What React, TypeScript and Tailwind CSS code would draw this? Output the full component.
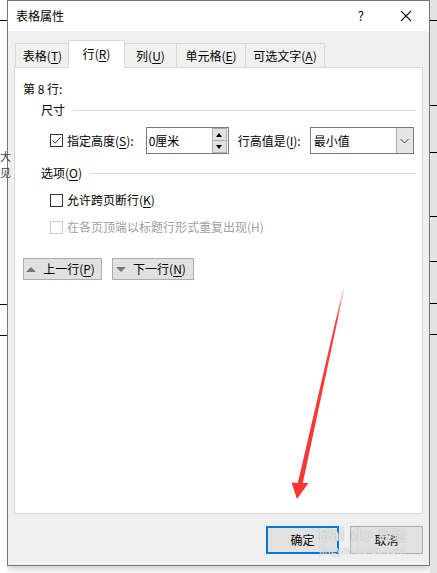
import React from "react";

const font = "font-['Noto_Sans_CJK_SC',sans-serif]";

const tabs = [
  { label: "表格", key: "T", w: "w-[54px]" },
  { label: "行", key: "R", w: "w-[57px]", active: true },
  { label: "列", key: "U", w: "w-[52px]" },
  { label: "单元格", key: "E", w: "w-[69px]" },
  { label: "可选文字", key: "A", w: "w-[80px]" },
];

function Mn({ text, k, after = "" }: { text: string; k: string; after?: string }) {
  return (
    <span>
      {text}(<span className="underline underline-offset-2">{k}</span>){after}
    </span>
  );
}

function Check({ checked, disabled }: { checked?: boolean; disabled?: boolean }) {
  return (
    <span
      className={`flex h-[13px] w-[13px] items-center justify-center border bg-white ${
        disabled ? "border-[#cccccc]" : "border-[#333333]"
      }`}
    >
      {checked && (
        <svg width="11" height="11" viewBox="0 0 11 11">
          <path d="M1.5 5.5 L4.2 8.2 L9.5 2.2" fill="none" stroke="#333" strokeWidth="1" />
        </svg>
      )}
    </span>
  );
}

function GroupTitle({ children }: { children: React.ReactNode }) {
  return (
    <div className="flex h-4 items-center gap-[8px] pl-[18px]">
      <span>{children}</span>
      <span className="h-px flex-1 bg-[#dcdcdc]" />
    </div>
  );
}

export default function App() {
  return (
    <div className={`relative flex h-[573px] w-[437px] overflow-hidden bg-white text-[12px] leading-4 text-black ${font}`}>
      {/* document behind, left */}
      <div className="relative w-[7px] shrink-0 bg-white">
        <div className="mt-[20px] h-px bg-black" />
        <div className="mt-[127px] text-[11px] leading-[16px] text-[#444]">大</div>
        <div className="text-[11px] leading-[16px] text-[#444]">见</div>
        <div className="mt-[124px] h-px bg-black" />
        <div className="mt-[30px] h-px bg-black" />
      </div>

      {/* dialog */}
      <div className="flex h-[566px] w-[423px] shrink-0 flex-col border border-[#777777] bg-[#f0f0f0] shadow-[0_2px_8px_rgba(0,0,0,0.25)]">
        <div className="flex h-[30px] items-center bg-white pl-[8px]">
          <span className="flex-1">表格属性</span>
          <span className="mr-[36px] text-[13px]">?</span>
          <svg width="12" height="12" viewBox="0 0 12 12" className="mr-[17px]">
            <path d="M1 1 L11 11 M11 1 L1 11" stroke="#111" strokeWidth="1.1" />
          </svg>
        </div>

        <div className="flex flex-1 flex-col px-[6px] pt-[9px]">
          <div className="flex h-[28px] items-end pl-px">
            {tabs.map((t) =>
              t.active ? (
                <div
                  key={t.key}
                  className={`${t.w} relative z-10 -mx-px flex h-[28px] items-center justify-center border border-b-0 border-[#d9d9d9] bg-white pb-[2px]`}
                >
                  <Mn text={t.label} k={t.key} />
                </div>
              ) : (
                <div
                  key={t.key}
                  className={`${t.w} flex h-[25px] items-center justify-center border border-b-0 border-r-0 border-[#d9d9d9] bg-[#f0f0f0] last:border-r`}
                >
                  <Mn text={t.label} k={t.key} />
                </div>
              )
            )}
          </div>

          <div className="-mt-px flex h-[447px] flex-col border border-[#d9d9d9] bg-white pl-[8px] pr-[6px] pt-[13px]">
            <div className="h-4">第 8 行:</div>

            <div className="mt-[5px]">
              <GroupTitle>尺寸</GroupTitle>
            </div>

            <div className="mt-[9px] flex h-[27px] items-center pl-[27px]">
              <Check checked />
              <span className="ml-[4px]">
                <Mn text="指定高度" k="S" after=":" />
              </span>
              <div className="ml-[12px] flex h-[27px] w-[83px] items-center border border-[#7a7a7a] bg-white pl-[2px] pr-px">
                <span className="flex-1">0厘米</span>
                <div className="flex h-[25px] w-[15px] flex-col">
                  <div className="flex flex-1 items-center justify-center border border-[#adadad] bg-[#e1e1e1]">
                    <span className="h-0 w-0 border-x-[3px] border-b-[4px] border-x-transparent border-b-black" />
                  </div>
                  <div className="-mt-px flex flex-1 items-center justify-center border border-[#adadad] bg-[#e1e1e1]">
                    <span className="h-0 w-0 border-x-[3px] border-t-[4px] border-x-transparent border-t-black" />
                  </div>
                </div>
              </div>
              <span className="ml-[9px]">
                <Mn text="行高值是" k="I" after=":" />
              </span>
              <div className="ml-[9px] flex h-[27px] w-[104px] items-center border border-[#7a7a7a] bg-white pl-[3px]">
                <span className="flex-1">最小值</span>
                <div className="flex h-full w-[17px] items-center justify-center border-l border-[#adadad] bg-[#e5e5e5]">
                  <svg width="9" height="6" viewBox="0 0 9 6">
                    <path d="M0.5 1 L4.5 5 L8.5 1" fill="none" stroke="#444" strokeWidth="1" />
                  </svg>
                </div>
              </div>
            </div>

            <div className="mt-[11px]">
              <GroupTitle>
                <Mn text="选项" k="O" />
              </GroupTitle>
            </div>

            <div className="mt-[11px] flex h-4 items-center pl-[27px]">
              <Check />
              <span className="ml-[4px]">
                <Mn text="允许跨页断行" k="K" />
              </span>
            </div>

            <div className="mt-[11px] flex h-4 items-center pl-[27px] text-[#a0a0a0]">
              <Check disabled />
              <span className="ml-[4px]">在各页顶端以标题行形式重复出现(H)</span>
            </div>

            <div className="mt-[23px] flex gap-[10px]">
              <button className="flex h-[22px] w-[79px] items-center justify-center gap-[7px] border border-[#adadad] bg-[#e1e1e1] pr-[4px]">
                <span className="h-0 w-0 border-x-[5px] border-b-[5px] border-x-transparent border-b-[#777]" />
                <Mn text="上一行" k="P" />
              </button>
              <button className="flex h-[22px] w-[82px] items-center justify-center gap-[7px] border border-[#adadad] bg-[#e1e1e1] pr-[4px]">
                <span className="h-0 w-0 border-x-[5px] border-t-[5px] border-x-transparent border-t-[#777]" />
                <Mn text="下一行" k="N" />
              </button>
            </div>
          </div>

          <div className="mt-[12px] flex justify-end gap-[11px]">
            <button className="flex h-[28px] w-[73px] items-center justify-center border-2 border-[#0078d7] bg-[#e1e1e1]">
              确定
            </button>
            <button className="flex h-[28px] w-[73px] items-center justify-center border border-[#adadad] bg-[#e1e1e1]">
              取消
            </button>
          </div>
        </div>
      </div>

      {/* document behind, right */}
      <div className="w-[7px] shrink-0 bg-[#e3e3e3]">
        <div className="mt-[20px] h-px bg-black" />
        <div className="mt-[84px] h-px bg-black" />
        <div className="mt-[46px] h-px bg-black" />
        <div className="mt-[63px] h-px bg-black" />
        <div className="mt-[44px] h-px bg-black" />
        <div className="mt-[41px] h-px bg-black" />
        <div className="mt-[30px] h-px bg-black" />
      </div>

      {/* watermark */}
      <div className="pointer-events-none absolute left-[318px] top-[524px] flex flex-col items-center text-[#d0d0d0]/80">
        <div className="flex items-center gap-[6px] text-[17px] font-bold leading-5 text-white/70 [text-shadow:0_0_1px_#999]">
          <span>Bai</span>
          <span>du</span>
          <span className="text-[14px]">经验</span>
        </div>
        <div className="text-[10px] leading-3 text-white/70 [text-shadow:0_0_1px_#aaa]">jingyan.baidu.com</div>
      </div>

      {/* red arrow */}
      <svg className="pointer-events-none absolute left-0 top-0" width="437" height="573" viewBox="0 0 437 573">
        <defs>
          <linearGradient id="arr" x1="343" y1="290" x2="297" y2="498" gradientUnits="userSpaceOnUse">
            <stop offset="0" stopColor="#ff3a3a" stopOpacity="0.2" />
            <stop offset="0.15" stopColor="#ff3a3a" />
            <stop offset="1" stopColor="#ff3333" />
          </linearGradient>
        </defs>
        <polygon
          points="343,289 344,290 302.8,483 308.5,483 297,499 291.5,482.5 297.8,483"
          fill="url(#arr)"
        />
      </svg>
    </div>
  );
}
